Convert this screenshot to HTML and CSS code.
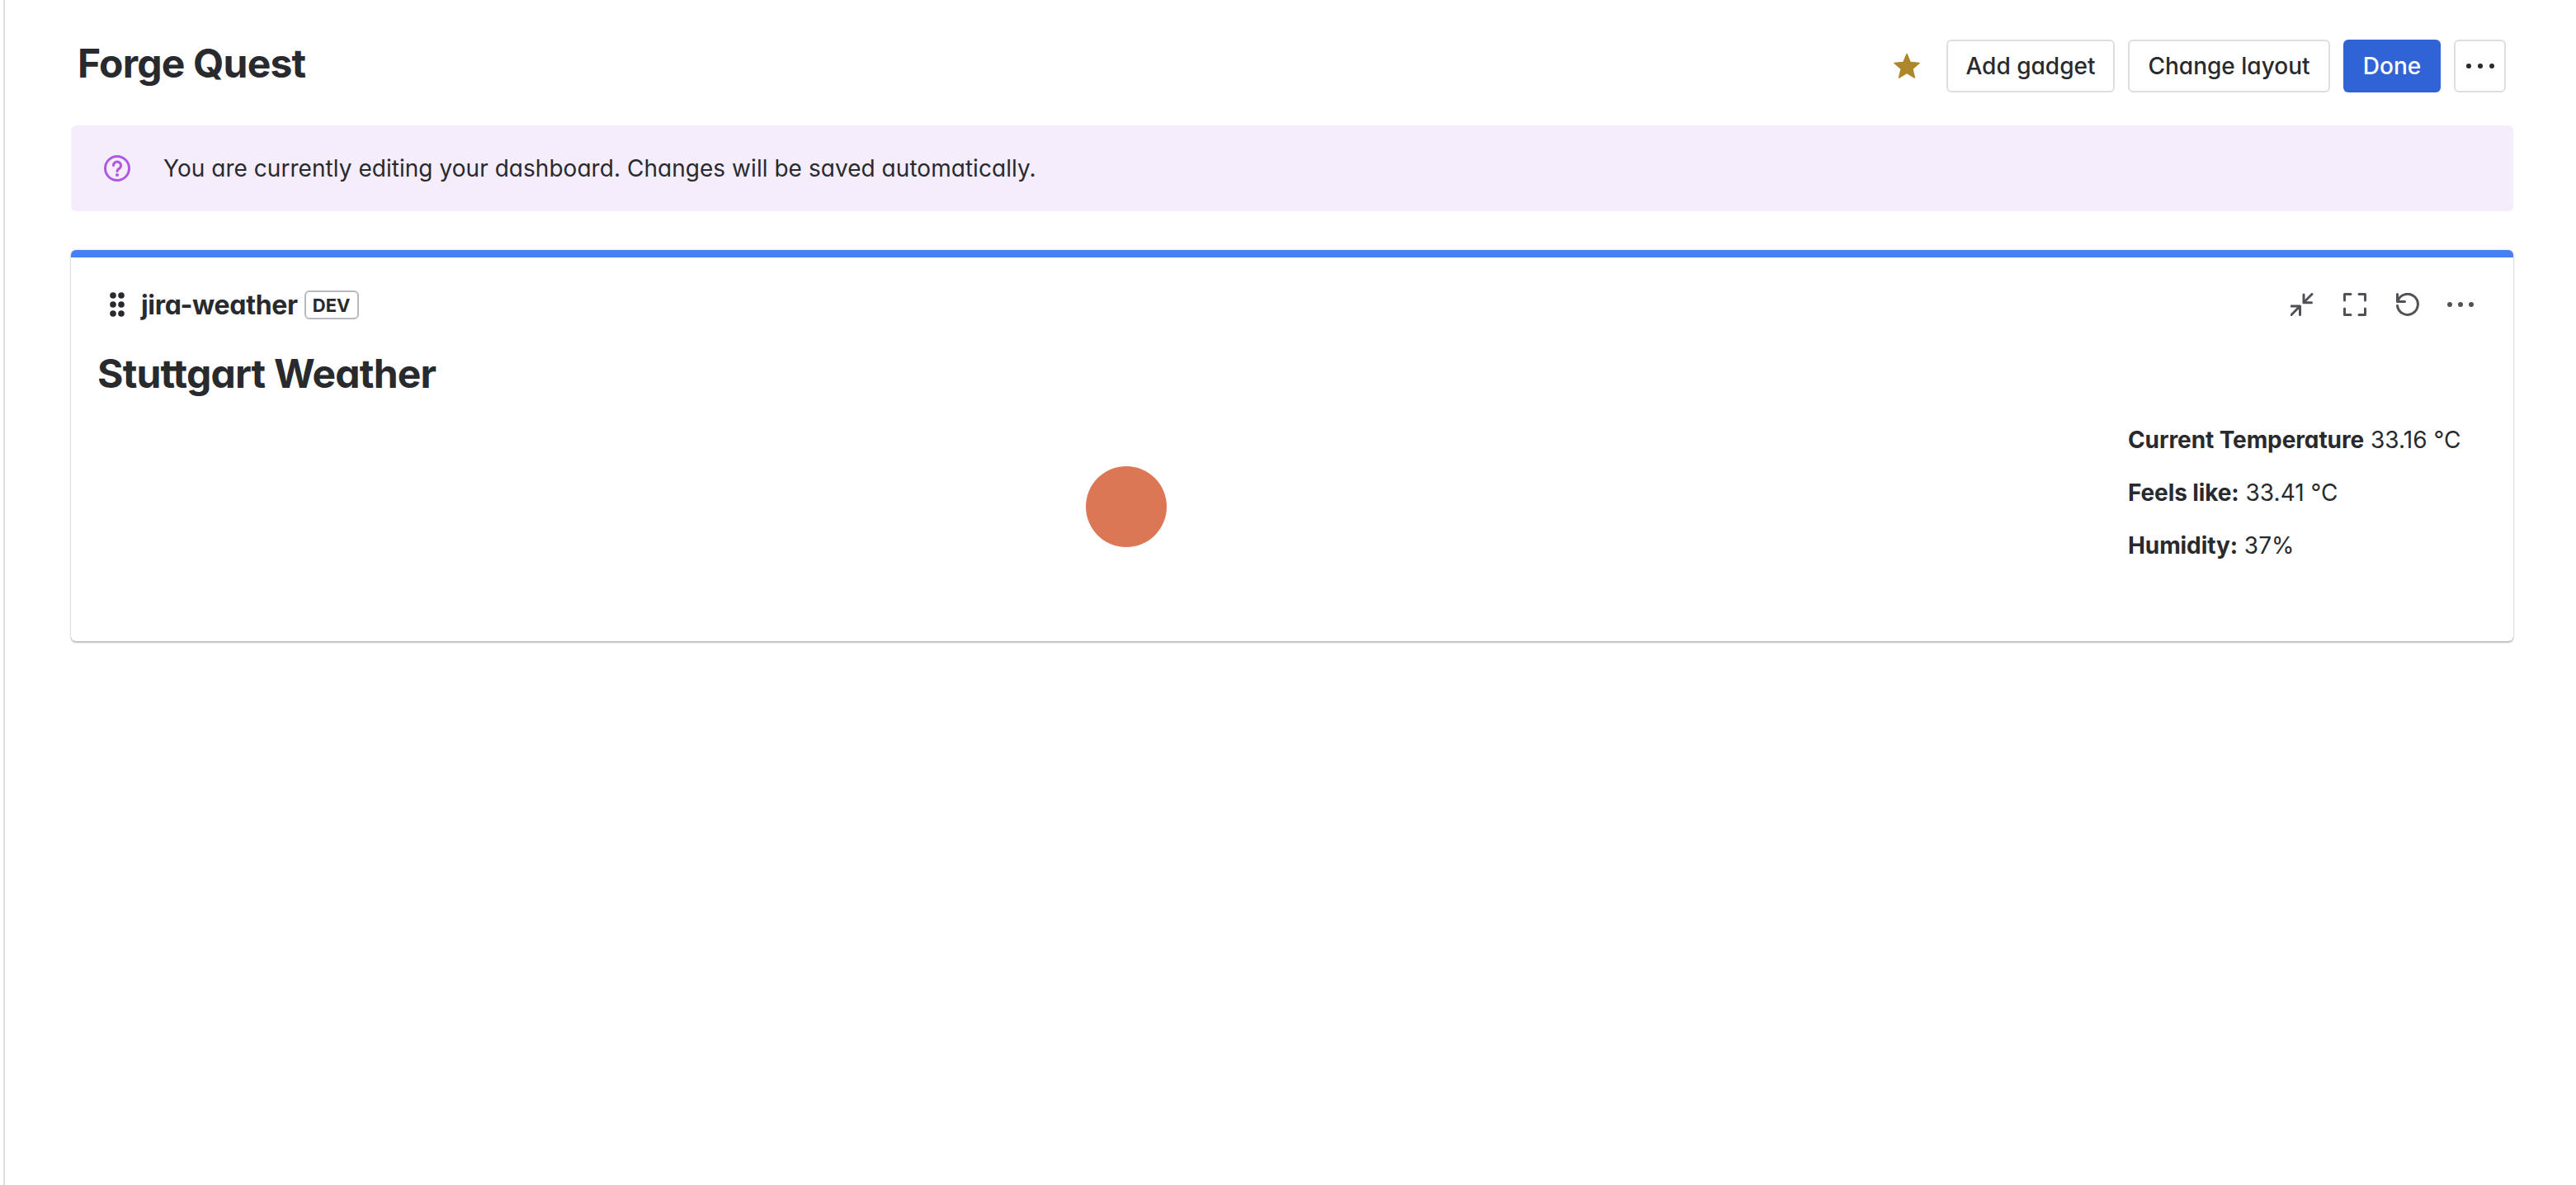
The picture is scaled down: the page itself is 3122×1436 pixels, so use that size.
FILE: index.html
```html
<!DOCTYPE html>
<html lang="en">
<head>
    <meta charset="UTF-8">
    <meta name="viewport" content="width=device-width, initial-scale=1.0">
    <title>Forge Quest</title>
    <link rel="stylesheet" href="styles.css">
</head>
<body>
    <main class="dashboard">
        <header class="page-header">
            <h1>Forge Quest</h1>
            <div class="actions">
                <svg class="star" viewBox="0 0 32 32" aria-hidden="true">
                    <path d="M16 1.5 L20.2 11.6 L31 12.4 L22.8 19.5 L25.4 30 L16 24.4 L6.6 30 L9.2 19.5 L1 12.4 L11.8 11.6 Z" fill="#ad8729" stroke="#ad8729" stroke-width="1.5" stroke-linejoin="round"/>
                </svg>
                <button class="btn btn-add">Add gadget</button>
                <button class="btn btn-layout">Change layout</button>
                <button class="btn btn-primary">Done</button>
                <button class="btn btn-more" aria-label="More">
                    <svg viewBox="0 0 36 8" aria-hidden="true">
                        <circle cx="4" cy="4" r="3"/>
                        <circle cx="18" cy="4" r="3"/>
                        <circle cx="32" cy="4" r="3"/>
                    </svg>
                </button>
            </div>
        </header>

        <section class="banner">
            <svg class="banner-icon" viewBox="0 0 32 32" aria-hidden="true">
                <circle cx="16" cy="16" r="14.5" fill="none" stroke="#af59e1" stroke-width="3"/>
                <path d="M11.5 12.5 a4.5 4.5 0 1 1 6.8 3.9 c-1.5 .9 -2.3 1.7 -2.3 3.1" fill="none" stroke="#af59e1" stroke-width="3" stroke-linecap="round"/>
                <circle cx="16" cy="24" r="2" fill="#af59e1"/>
            </svg>
            <p>You are currently editing your dashboard. Changes will be saved automatically.</p>
        </section>

        <section class="gadget">
            <div class="gadget-header">
                <svg class="drag" viewBox="0 0 18 30" aria-hidden="true">
                    <circle cx="4" cy="4" r="3.8"/><circle cx="14" cy="4" r="3.8"/>
                    <circle cx="4" cy="15" r="3.8"/><circle cx="14" cy="15" r="3.8"/>
                    <circle cx="4" cy="26" r="3.8"/><circle cx="14" cy="26" r="3.8"/>
                </svg>
                <span class="gadget-name">jira-weather</span>
                <span class="badge">DEV</span>
                <div class="gadget-tools">
                    <span class="tool">
                        <svg viewBox="0 0 28 28" aria-hidden="true">
                            <path d="M26 1.5 L16 11.5 M16 2 V11.7 H25.5 M1 16 H11.5 V26.5 M11 16.5 L1 26.5"/>
                        </svg>
                    </span>
                    <span class="tool">
                        <svg viewBox="0 0 28 28" aria-hidden="true">
                            <path d="M9 1.5 H1.5 V9 M19 1.5 H26.5 V9 M1.5 19 V26.5 H9 M26.5 19 V26.5 H19"/>
                        </svg>
                    </span>
                    <span class="tool">
                        <svg viewBox="0 0 28 28" aria-hidden="true">
                            <path d="M1.5 1.5 V10.5 H10.5 M2 10 A12.5 12.5 0 1 1 1.5 15.5"/>
                        </svg>
                    </span>
                    <span class="tool">
                        <svg class="tool-dots" viewBox="0 0 32 6" aria-hidden="true">
                            <circle cx="3" cy="3" r="3"/>
                            <circle cx="16" cy="3" r="3"/>
                            <circle cx="29" cy="3" r="3"/>
                        </svg>
                    </span>
                </div>
            </div>

            <h2>Stuttgart Weather</h2>

            <div class="weather">
                <div class="weather-visual">
                    <div class="sun"></div>
                </div>
                <div class="weather-stats">
                    <p><strong>Current Temperature</strong> 33.16 °C</p>
                    <p><strong>Feels like:</strong> 33.41 °C</p>
                    <p><strong>Humidity:</strong> 37%</p>
                </div>
            </div>
        </section>
    </main>
</body>
</html>
```

FILE: styles.css
```css
/* Reset some default browser styles */
* {
    margin: 0;
    padding: 0;
    box-sizing: border-box;
}

body {
    background: #fff;
    color: #292a2e;
    font-family: 'Inter', 'Noto Sans', sans-serif;
    font-feature-settings: "cv11";
    font-size: 28px;
    letter-spacing: 0.04px;
}

/* Page column, thin line on the left is the sidebar edge */
.dashboard {
    height: 1436px;
    margin-left: 4px;
    padding: 48px 76px 0 80px;
    border-left: 2px solid #dddee1;
}

/* Title row */
.page-header {
    display: flex;
    justify-content: space-between;
    align-items: center;
    height: 64px;
    padding: 0 9px 0 8px;
}

.page-header h1 {
    margin-top: -8px;
    font-size: 48px;
    font-weight: 700;
    letter-spacing: -0.8px;
}

.actions {
    display: flex;
    align-items: center;
    gap: 16px;
}

.star {
    width: 32px;
    height: 32px;
    margin-right: 16px;
}

.btn {
    height: 64px;
    border: 2px solid #dddee1;
    border-radius: 6px;
    background: #fff;
    color: #292a2e;
    font-family: inherit;
    font-feature-settings: inherit;
    font-size: 28px;
    font-weight: 500;
}

.btn-add {
    width: 204px;
}

.btn-layout {
    width: 245px;
}

.btn-primary {
    width: 118px;
    border: none;
    background: #3063d5;
    color: #fff;
}

.btn-more {
    display: flex;
    align-items: center;
    justify-content: center;
    width: 63px;
}

.btn-more svg {
    width: 36px;
    height: 8px;
    fill: #292a2e;
}

/* Edit notice */
.banner {
    display: flex;
    align-items: center;
    height: 104px;
    margin-top: 40px;
    padding-left: 40px;
    background: #f5edfc;
    border-radius: 6px;
}

.banner-icon {
    width: 32px;
    height: 32px;
    margin-right: 40px;
}

/* Gadget card */
.gadget {
    height: 474px;
    margin-top: 47px;
    padding: 16px 32px 0;
    border-radius: 6px;
    border-top: 9px solid #4580f5;
    box-shadow: 0 2px 2px rgba(30, 31, 33, 0.25), 0 0 2px rgba(30, 31, 33, 0.31);
}

.gadget-header {
    display: flex;
    align-items: center;
    height: 48px;
    margin-top: 17px;
    padding-left: 15px;
}

.drag {
    width: 18px;
    height: 30px;
    margin-right: 20px;
    fill: #292a2e;
}

.gadget-name {
    font-size: 32px;
    font-weight: 700;
    letter-spacing: -0.3px;
}

.badge {
    height: 35px;
    margin-left: 8px;
    padding: 0 8px;
    border: 2px solid #b7b9be;
    border-radius: 6px;
    font-size: 22px;
    font-weight: 700;
    line-height: 33px;
}

.gadget-tools {
    display: flex;
    margin-left: auto;
}

.tool {
    display: flex;
    align-items: center;
    justify-content: center;
    width: 64px;
    height: 48px;
}

.tool svg {
    width: 28px;
    height: 28px;
    fill: none;
    stroke: #505258;
    stroke-width: 3;
    stroke-linecap: round;
    stroke-linejoin: round;
}

.tool .tool-dots {
    width: 32px;
    height: 6px;
    fill: #505258;
    stroke: none;
}

.gadget h2 {
    margin-top: 31px;
    font-size: 48px;
    font-weight: 700;
    line-height: 58px;
    letter-spacing: -0.8px;
}

/* Weather body */
.weather {
    display: flex;
    margin-top: 19px;
}

.weather-visual {
    flex: 1;
    display: flex;
    justify-content: center;
    padding-left: 33px;
    padding-top: 64px;
}

.sun {
    width: 98px;
    height: 98px;
    border-radius: 50%;
    background: #dc7755;
    filter: blur(0.6px);
}

.weather-stats {
    width: 435px;
}

.weather-stats p {
    height: 64px;
    line-height: 64px;
}

.weather-stats strong {
    font-weight: 700;
    letter-spacing: -0.1px;
}
```
